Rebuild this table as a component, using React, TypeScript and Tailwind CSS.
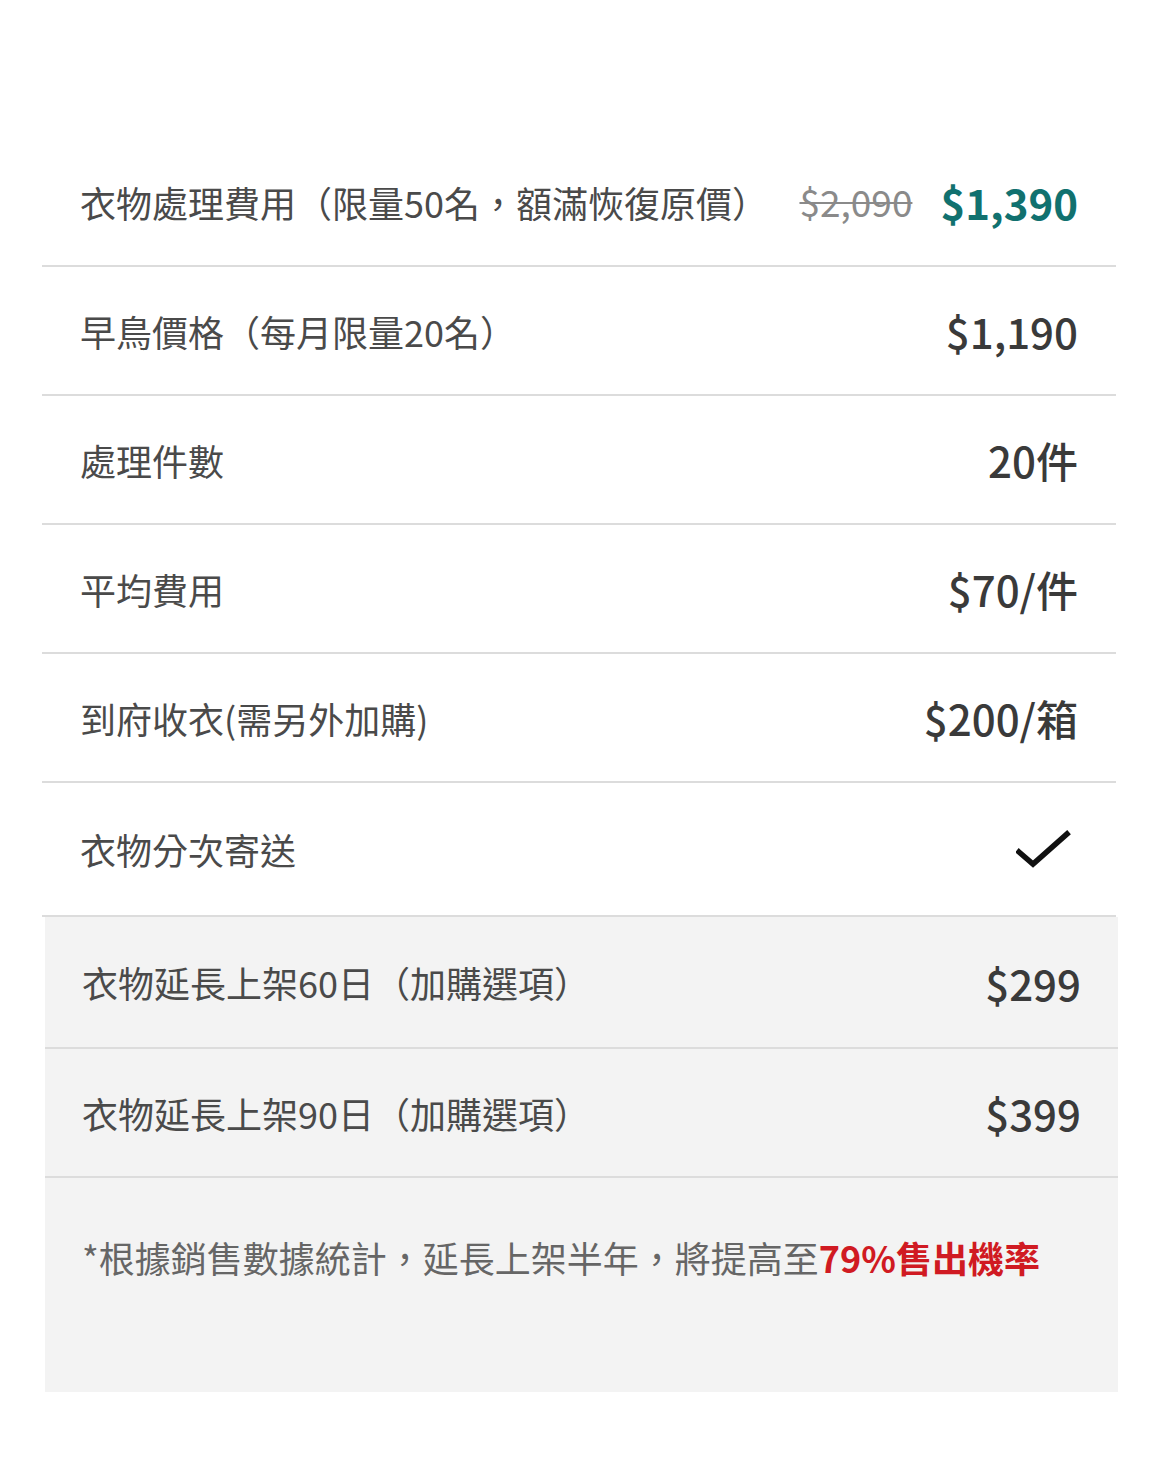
const font = { fontFamily: '"Noto Sans CJK TC", "Noto Sans", sans-serif' };

function Row({ label, children, h = 'h-[129px]', px = 'px-[38px]' }: { label: string; children: React.ReactNode; h?: string; px?: string }) {
  return (
    <div className={`flex items-center justify-between ${px} ${h} border-b-2 border-[#dcdcdc]`}>
      <span className="text-[36px] text-[#4a4a4a]">{label}</span>
      <div className="flex items-center">{children}</div>
    </div>
  );
}

function Price({ children }: { children: React.ReactNode }) {
  return <span className="text-[42px] font-medium text-[#3a3a3a]">{children}</span>;
}

export default function App() {
  return (
    <div className="min-h-[1461px] bg-white pt-[138px]" style={font}>
      <div className="ml-[42px] w-[1074px]">
        <Row label="衣物處理費用（限量50名，額滿恢復原價）">
          <span className="mr-[28px] text-[37px] text-[#8a8a8a] line-through decoration-2">$2,090</span>
          <span className="text-[42px] font-bold text-[#11716f]">$1,390</span>
        </Row>
        <Row label="早鳥價格（每月限量20名）">
          <Price>$1,190</Price>
        </Row>
        <Row label="處理件數">
          <Price>20件</Price>
        </Row>
        <Row label="平均費用">
          <Price>$70/件</Price>
        </Row>
        <Row label="到府收衣(需另外加購)">
          <Price>$200/箱</Price>
        </Row>
        <Row label="衣物分次寄送" h="h-[134px]">
          <svg width="56" height="42" viewBox="0 0 56 42" className="mr-[6px]">
            <path d="M3 24 L17 36 L51 6" fill="none" stroke="#111" strokeWidth="5.5" strokeLinecap="square" />
          </svg>
        </Row>
      </div>
      <div className="ml-[45px] w-[1073px] bg-[#f3f3f3]">
        <Row label="衣物延長上架60日（加購選項）" h="h-[132px]" px="px-[37px]">
          <Price>$299</Price>
        </Row>
        <Row label="衣物延長上架90日（加購選項）" px="px-[37px]">
          <Price>$399</Price>
        </Row>
        <div className="h-[214px] px-[37px] pt-[52px]">
          <p className="text-[36px] text-[#666]">
            *根據銷售數據統計，延長上架半年，將提高至
            <span className="font-bold text-[#d01a22]">79%售出機率</span>
          </p>
        </div>
      </div>
    </div>
  );
}
